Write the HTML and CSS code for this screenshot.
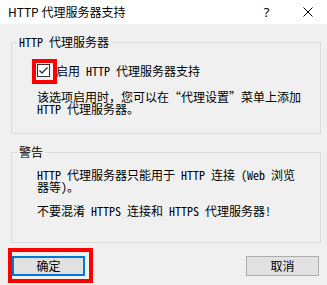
FILE: index.html
```html
<!DOCTYPE html>
<html lang="zh-CN">
<head>
<meta charset="utf-8">
<title>HTTP 代理服务器支持</title>
<link rel="stylesheet" href="styles.css">
</head>
<body>
<div class="dialog">
  <div class="titlebar">
    <span class="title">HTTP 代理服务器支持</span>
    <span class="tb-btn help">?</span>
    <span class="tb-btn close">
      <svg width="10" height="10" viewBox="0 0 10 10"><path d="M0.5 0.5 L9.5 9.5 M9.5 0.5 L0.5 9.5" stroke="#000" stroke-width="1" fill="none"/></svg>
    </span>
  </div>
  <div class="content">
    <fieldset class="group group-proxy">
      <legend>HTTP 代理服务器</legend>
      <div class="group-body">
        <div class="check-row">
          <span class="checkbox marked">
            <svg width="11" height="11" viewBox="0 0 11 11"><path d="M1.5 5.5 L4 8 L9.5 2.5" stroke="#333" stroke-width="1.4" fill="none"/></svg>
          </span>
          <span class="check-label">启用 HTTP 代理服务器支持</span>
        </div>
        <p class="desc">该选项启用时，您可以在“代理设置”菜单上添加<br>HTTP 代理服务器。</p>
      </div>
    </fieldset>
    <fieldset class="group group-warn">
      <legend>警告</legend>
      <div class="group-body">
        <p class="desc">HTTP 代理服务器只能用于 HTTP 连接 (Web 浏览<br>器等)。</p>
        <p class="desc gap">不要混淆 HTTPS 连接和 HTTPS 代理服务器!</p>
      </div>
    </fieldset>
    <div class="footer">
      <span class="btn-wrap marked-btn"><button class="btn default">确定</button></span>
      <button class="btn">取消</button>
    </div>
  </div>
</div>
</body>
</html>
```
FILE: styles.css
```css
html, body {
  margin: 0;
  padding: 0;
}
body {
  width: 327px;
  height: 285px;
  overflow: hidden;
  background: #f0f0f0;
  font-family: "Noto Sans Mono CJK SC", "Noto Sans CJK SC", monospace;
  font-size: 12px;
  color: #000;
}
.dialog {
  width: 327px;
  height: 285px;
  display: flex;
  flex-direction: column;
}
.titlebar {
  height: 24px;
  background: #fff;
  display: flex;
  align-items: center;
  padding-left: 8px;
  font-family: "Noto Sans CJK SC", sans-serif;
  font-size: 12px;
  line-height: 14px;
}
.title {
  flex: 1;
  padding-bottom: 1px;
}
.tb-btn {
  display: flex;
  align-items: center;
  justify-content: center;
  height: 24px;
}
.help {
  width: 45px;
  font-family: "Noto Sans", sans-serif;
  font-size: 13px;
}
.close {
  width: 38px;
}
.content {
  padding: 12px 6px 0 11px;
  display: flex;
  flex-direction: column;
}
.group {
  margin: 0;
  border: 1px solid #dcdcdc;
  padding: 0;
  min-width: 0;
}
.group legend {
  margin-left: 5px;
  padding: 0 2px;
  line-height: 12px;
  font-size: 12px;
}
.group-body {
  padding-left: 25px;
}
.group-proxy .group-body {
  padding-top: 16px;
  padding-bottom: 18px;
}
.group-warn {
  margin-top: 12px;
}
.group-warn .group-body {
  padding-top: 11px;
  padding-bottom: 25px;
}
.check-row {
  display: flex;
  align-items: center;
  height: 13px;
  gap: 6px;
}
.checkbox {
  position: relative;
  width: 11px;
  height: 11px;
  border: 1px solid #333;
  background: #fff;
  display: flex;
}
.marked::after {
  content: "";
  position: absolute;
  left: -6px;
  top: -6px;
  width: 17px;
  height: 17px;
  border: 4px solid #ff0000;
}
.check-label {
  line-height: 13px;
  white-space: nowrap;
}
.desc {
  margin: 14px 0 0 0;
  line-height: 12px;
  white-space: nowrap;
}
.group-warn .desc {
  margin-top: 0;
}
.group-warn .desc.gap {
  margin-top: 12px;
}
.footer {
  margin-top: 13px;
  display: flex;
  justify-content: space-between;
  padding: 0 2px 0 1px;
}
.btn-wrap {
  position: relative;
  display: flex;
}
.btn {
  width: 73px;
  height: 20px;
  margin: 0;
  padding: 0;
  background: #e1e1e1;
  border: 1px solid #adadad;
  font-family: "Noto Sans CJK SC", sans-serif;
  font-size: 12px;
  line-height: 14px;
  color: #000;
}
.btn.default {
  border: 2px solid #0078d7;
}
.marked-btn::after {
  content: "";
  position: absolute;
  left: -4px;
  top: -8px;
  width: 77px;
  height: 27px;
  border: 4px solid #ff0000;
}
```
